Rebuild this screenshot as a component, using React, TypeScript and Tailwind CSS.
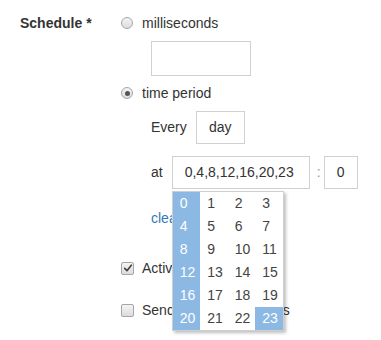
const hours = Array.from({ length: 24 }, (_, i) => i);
const selected = [0, 4, 8, 12, 16, 20, 23];

function Radio({ checked }: { checked?: boolean }) {
  return (
    <span className="flex h-[12px] w-[12px] flex-shrink-0 items-center justify-center rounded-full border border-[#a6a6a6] bg-gradient-to-b from-[#f4f4f4] to-[#dcdcdc]">
      {checked && <span className="h-[5px] w-[5px] rounded-full bg-[#555]" />}
    </span>
  );
}

function Checkbox({ checked }: { checked?: boolean }) {
  return (
    <span className="flex h-[13px] w-[13px] flex-shrink-0 items-center justify-center rounded-[2px] border border-[#a6a6a6] bg-gradient-to-b from-[#f4f4f4] to-[#dcdcdc]">
      {checked && (
        <svg viewBox="0 0 12 12" className="h-[10px] w-[10px]" aria-hidden="true">
          <path d="M2 6.5 L4.8 9.2 L10 2.6" fill="none" stroke="#444" strokeWidth={2} strokeLinecap="round" strokeLinejoin="round" />
        </svg>
      )}
    </span>
  );
}

export default function App() {
  return (
    <div className="h-[340px] w-[381px] bg-white pl-[20px] pt-[13px] text-[14px] text-[#333] font-['Liberation_Sans',Arial,sans-serif]">
      <div className="flex">
        <div className="w-[101px] leading-[20px] font-bold">Schedule *</div>
        <div className="flex flex-col">
          <label className="flex h-[20px] items-center gap-[9px]">
            <Radio />
            <span>milliseconds</span>
          </label>
          <div className="ml-[30px] mt-[8px] h-[35px] w-[100px] border border-[#d0d0d0]" />
          <label className="mt-[7px] flex h-[20px] items-center gap-[9px]">
            <Radio checked />
            <span>time period</span>
          </label>

          <div className="ml-[30px] flex flex-col">
            <div className="mt-[8px] flex items-center gap-[9px]">
              <span>Every</span>
              <div className="flex h-[33px] w-[49px] items-center justify-center border border-[#d0d0d0]">day</div>
            </div>

            <div className="mt-[12px] flex items-center">
              <span className="mr-[9px]">at</span>
              <div className="relative">
                <div className="flex h-[33px] w-[138px] items-center pl-[12px] border border-[#d0d0d0]">0,4,8,12,16,20,23</div>
                <div className="absolute left-0 top-[35px] z-10 border border-[#cfcfcf] bg-white shadow-[2px_2px_3px_rgba(0,0,0,0.25)]">
                  <div className="grid w-[110px] grid-cols-4">
                    {hours.map((h) => (
                      <div
                        key={h}
                        className={
                          selected.includes(h)
                            ? "h-[23px] pl-[7px] leading-[23px] bg-[#8cb9e3] text-white"
                            : "h-[23px] pl-[7px] leading-[23px] text-[#444]"
                        }
                      >
                        {h}
                      </div>
                    ))}
                  </div>
                </div>
              </div>
              <span className="ml-[7px] mr-[3px] text-[#999]">:</span>
              <div className="flex h-[33px] w-[34px] items-center justify-center border border-[#d0d0d0]">0</div>
            </div>

            <a className="mt-[19px] h-[20px] leading-[20px] text-[#337ab7]">clear</a>
          </div>

          <label className="mt-[30px] flex h-[20px] items-center gap-[8px]">
            <Checkbox checked />
            <span>Active</span>
          </label>
          <label className="mt-[22px] flex h-[20px] items-center gap-[8px]">
            <Checkbox />
            <span>Send notification emails</span>
          </label>
        </div>
      </div>
    </div>
  );
}
